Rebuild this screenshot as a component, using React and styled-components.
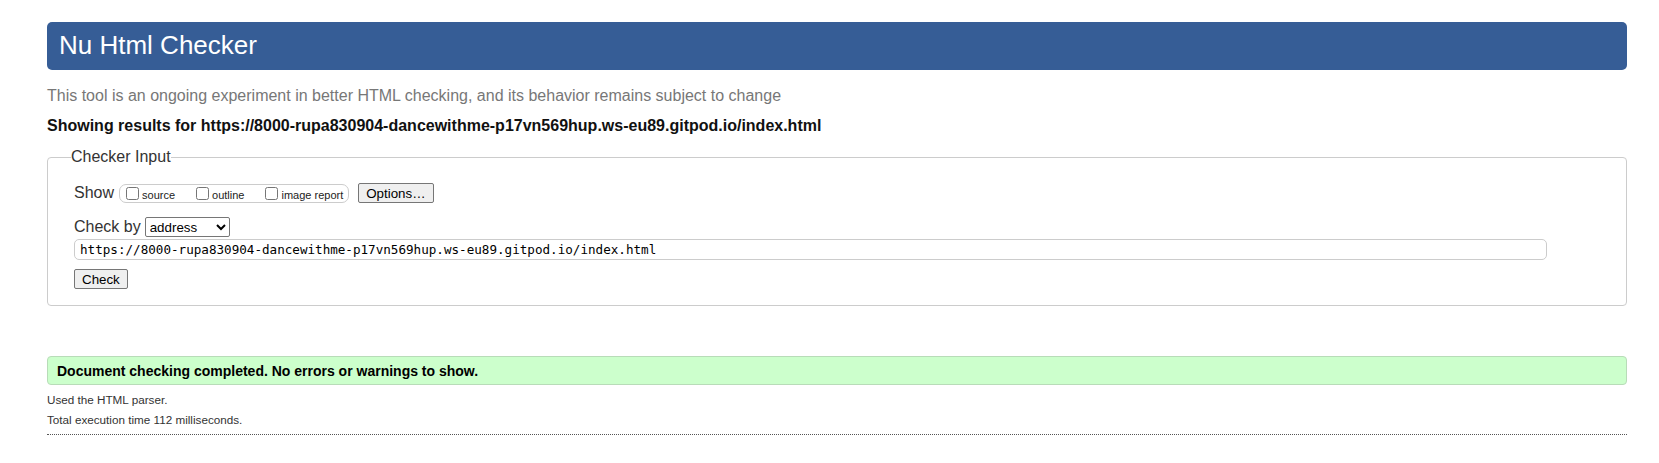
import React, { useState } from "react";
import styled, { createGlobalStyle } from "styled-components";

const checkedUrl =
  "https://8000-rupa830904-dancewithme-p17vn569hup.ws-eu89.gitpod.io/index.html";

const GlobalStyle = createGlobalStyle`
  body {
    margin: 0;
    background: #ffffff;
    font-family: "Liberation Sans", Arial, sans-serif;
    color: #000000;
  }
`;

const Page = styled.div`
  padding: 22px 32px 20px 47px;
`;

const TitleBar = styled.h1`
  margin: 0;
  height: 48px;
  box-sizing: border-box;
  padding: 0 12px 2px;
  display: flex;
  align-items: center;
  background: #365d96;
  color: #ffffff;
  border-radius: 5px;
  font-size: 26px;
  font-weight: normal;
`;

const Intro = styled.p`
  margin: 17px 0 0;
  font-size: 16px;
  color: #777777;
`;

const ResultsFor = styled.p`
  margin: 12px 0 0;
  font-size: 16px;
  font-weight: bold;
  color: #111111;
`;

const Fieldset = styled.fieldset`
  margin: 13px 0 0;
  padding: 17px 26px 16px;
  border: 1px solid #cccccc;
  border-radius: 4px;

  legend {
    margin-left: -3px;
    padding: 0;
    font-size: 16px;
    color: #333333;
  }
`;

const Row = styled.div`
  display: flex;
  align-items: center;
  gap: ${p => p.$gap || "4px"};
  margin-top: ${p => p.$top || "0"};
  font-size: 16px;
  color: #333333;
`;

const OptionGroup = styled.span`
  display: inline-flex;
  align-items: center;
  height: 19px;
  box-sizing: border-box;
  padding: 0 5px 0 6px;
  border: 1px solid #cccccc;
  border-radius: 7px;
  gap: 21px;
`;

const CheckLabel = styled.label`
  display: inline-flex;
  align-items: center;
  font-size: 11px;
  color: #222222;

  input {
    width: 13px;
    height: 13px;
    margin: 0 3px 0 0;
  }

  span {
    padding-top: 3px;
  }
`;

const Button = styled.button`
  height: 20px;
  padding: 0 7px;
  margin-left: ${p => p.$offset || "0"};
  font-family: "Liberation Sans", Arial, sans-serif;
  font-size: 13.33px;
  color: #000000;
  background: #efefef;
  border: 1px solid #767676;
  border-radius: 2px;
`;

const Select = styled.select`
  width: 85px;
  height: 20px;
  font-family: "Liberation Sans", Arial, sans-serif;
  font-size: 13.33px;
  color: #000000;
  border: 1px solid #767676;
  border-radius: 2px;
  background: #ffffff;
`;

const UrlInput = styled.input`
  width: 1473px;
  height: 21px;
  box-sizing: border-box;
  padding: 0 5px;
  border: 1px solid #cccccc;
  border-radius: 5px;
  font-family: "DejaVu Sans Mono", "Liberation Mono", monospace;
  font-size: 12.6px;
  color: #000000;
`;

const Success = styled.div`
  margin-top: 50px;
  height: 29px;
  box-sizing: border-box;
  display: flex;
  align-items: center;
  padding: 0 9px;
  background: #ccffcc;
  border: 1px solid #b8dcb8;
  border-radius: 4px;
  font-size: 14px;
  font-weight: bold;
  color: #000000;
`;

const Detail = styled.p`
  margin: ${p => p.$top} 0 0;
  font-size: 11.7px;
  color: #333333;
`;

const Rule = styled.hr`
  margin: 8px 0 0;
  border: 0;
  border-top: 1px dotted #555555;
  height: 0;
`;

const App = () => {
  const [url, setUrl] = useState(checkedUrl);

  return (
    <Page>
      <GlobalStyle />
      <TitleBar>Nu Html Checker</TitleBar>
      <Intro>
        This tool is an ongoing experiment in better HTML checking, and its
        behavior remains subject to change
      </Intro>
      <ResultsFor>Showing results for {checkedUrl}</ResultsFor>

      <Fieldset>
        <legend>Checker Input</legend>
        <Row $gap="5px">
          Show
          <OptionGroup>
            <CheckLabel>
              <input type="checkbox" />
              <span>source</span>
            </CheckLabel>
            <CheckLabel>
              <input type="checkbox" />
              <span>outline</span>
            </CheckLabel>
            <CheckLabel>
              <input type="checkbox" />
              <span>image report</span>
            </CheckLabel>
          </OptionGroup>
          <Button $offset="4px">Options…</Button>
        </Row>
        <Row $top="14px">
          Check by
          <Select defaultValue="address">
            <option value="address">address</option>
            <option value="file">file upload</option>
            <option value="text">text input</option>
          </Select>
        </Row>
        <Row $top="2px">
          <UrlInput value={url} onChange={e => setUrl(e.target.value)} />
        </Row>
        <Row $top="9px">
          <Button>Check</Button>
        </Row>
      </Fieldset>

      <Success>Document checking completed. No errors or warnings to show.</Success>
      <Detail $top="8px">Used the HTML parser.</Detail>
      <Detail $top="7px">Total execution time 112 milliseconds.</Detail>
      <Rule />
    </Page>
  );
};

export default App;
